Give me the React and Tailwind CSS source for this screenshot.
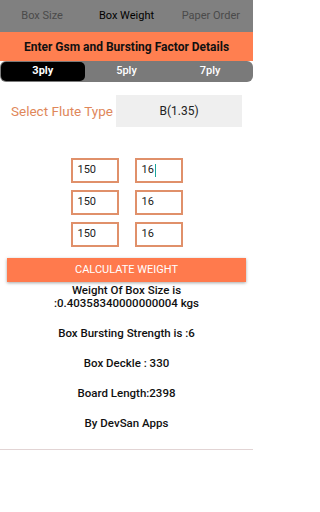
import React from "react";

export default function App() {
  const rows = [["150", "16"], ["150", "16"], ["150", "16"]];
  return (
    <div className="w-[253px] h-[512px] bg-white overflow-hidden" style={{ fontFamily: "Roboto, 'Liberation Sans', sans-serif" }}>
      <div className="h-[32px] bg-[#808080] grid grid-cols-3 items-center text-[11px] text-center">
        <span className="text-[#4a4a4a]">Box Size</span>
        <span className="text-black">Box Weight</span>
        <span className="text-[#4a4a4a]">Paper Order</span>
      </div>
      <div className="h-[29px] bg-[#ff7f50] flex items-center justify-center text-[12px] font-bold text-[#111]">
        Enter Gsm and Bursting Factor Details
      </div>
      <div className="h-[21px] bg-[#7a7a7a] rounded-[6px] grid grid-cols-3 items-center text-[11px] font-bold text-white text-center p-[1px]">
        <span className="bg-black rounded-[5px] h-[19px] flex items-center justify-center">3ply</span>
        <span className="font-medium">5ply</span>
        <span className="font-medium">7ply</span>
      </div>
      <div className="h-[368px] border-b border-[#e2d4d4] flex flex-col">
        <div className="flex items-center mt-[13px] pl-[11px] pr-[11px]">
          <span className="text-[13.5px] text-[#e0875a] whitespace-nowrap">Select Flute Type</span>
          <div className="ml-auto h-[32px] w-[126px] bg-[#efefef] flex items-center justify-center text-[12px] text-[#222]">B(1.35)</div>
        </div>
        <div className="flex flex-col items-center gap-[7px] mt-[31px]">
          {rows.map((r, i) => (
            <div key={i} className="flex gap-[16px]">
              {r.map((v, j) => (
                <div key={j} className="w-[48px] h-[25px] border-2 border-[#e0906a] flex items-center pl-[5px] text-[11px] text-[#222]">
                  {v}
                  {i === 0 && j === 1 && <span className="inline-block w-[1.5px] h-[13px] bg-[#1aa39a] ml-[1px]"></span>}
                </div>
              ))}
            </div>
          ))}
        </div>
        <div className="mx-[7px] mt-[11px] h-[24px] bg-[#ff7a4d] shadow-[0_1px_3px_rgba(0,0,0,0.35)] flex items-center justify-center text-[11px] text-white">
          CALCULATE WEIGHT
        </div>
        <div className="flex flex-col items-center text-[11.5px] font-medium text-[#111] leading-[12.5px] text-center mt-[2px]">
          <p>Weight Of Box Size is<br />:0.40358340000000004 kgs</p>
          <p className="mt-[17.5px]">Box Bursting Strength is :6</p>
          <p className="mt-[17.5px]">Box Deckle : 330</p>
          <p className="mt-[17.5px]">Board Length:2398</p>
          <p className="mt-[17.5px]">By DevSan Apps</p>
        </div>
      </div>
    </div>
  );
}
